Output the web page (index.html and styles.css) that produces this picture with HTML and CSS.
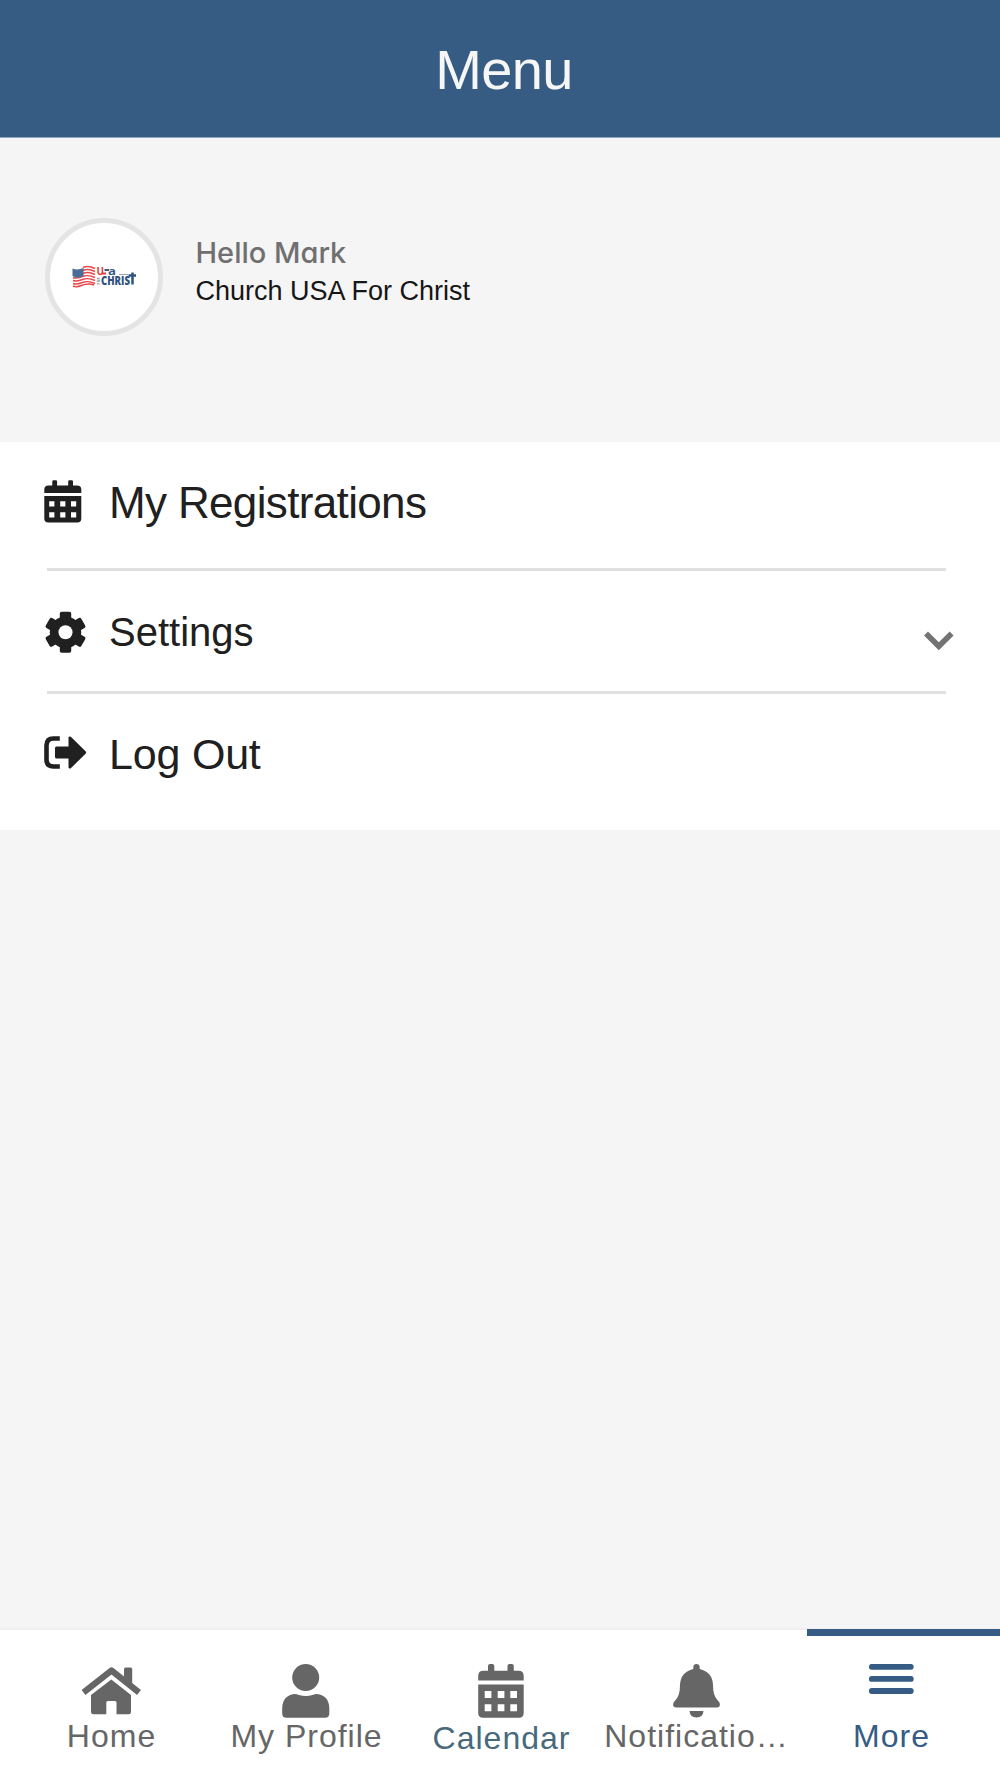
FILE: index.html
```html
<!DOCTYPE html>
<html lang="en">
<head>
<meta charset="utf-8">
<title>Menu</title>
<link rel="stylesheet" href="styles.css">
</head>
<body>
<div class="app">
  <header class="header"><h1>Menu</h1></header>

  <section class="profile">
    <div class="avatar">
      <svg width="64" height="26" viewBox="0 0 64 26">
        <path d="M1 5C7 9 11 0 23 4V21C12 17 8 27 1 22Z" fill="#fff"/>
        <g fill="none" stroke="#e8474a" stroke-width="1.5">
          <path d="M11 3.5C15 1.5 18 2 23 4.5"/>
          <path d="M11 6.5C15 4.5 18 5 23 7.5"/>
          <path d="M11 9.5C15 7.5 18 8 23 10.5"/>
          <path d="M1 13.5C8 16.5 11 8 23 13.5"/>
          <path d="M1 16.5C8 19.5 11 11 23 16.5"/>
          <path d="M1 19.5C8 22.5 11 14 23 19.5"/>
          <path d="M1 22C8 25.5 11 17 22 21"/>
        </g>
        <path d="M.5 4.5C5 6.5 8 5 11.500 4V12C8 14 5 14.500 .5 12Z" fill="#4a6c97"/>
        <text class="logo-usa" x="24.5" y="11" textLength="7.5" lengthAdjust="spacingAndGlyphs" fill="#e33b40">U</text>
        <path d="M30 9.500H34" stroke="#e33b40" stroke-width="2"/>
        <path d="M32.500 6H37" stroke="#365c85" stroke-width="2"/>
        <text class="logo-usa" x="36" y="11" textLength="8" lengthAdjust="spacingAndGlyphs" fill="#365c85">a</text>
        <text class="logo-for" transform="translate(27.5 20.5) rotate(-90)" textLength="7">FOR</text>
        <text class="logo-christ" x="29" y="20.5" textLength="29" lengthAdjust="spacingAndGlyphs">CHRIS</text>
        <path d="M60.500 8.500V20.500M56.500 11.500H64" stroke="#2f5380" stroke-width="2.500"/>
        <path d="M47 10.500H56" stroke="#9aa4ac" stroke-width="1"/>
      </svg>
    </div>
    <div class="who">
      <p class="hello">Hello Mark</p>
      <p class="org">Church USA For Christ</p>
    </div>
  </section>

  <main class="menu">
    <a class="row registrations">
      <svg class="row-icon" viewBox="0 0 64 50">
        <path fill-rule="evenodd" d="M8.300 4.500q0-1.300 1.300-1.300h2.200q1.300 0 1.300 1.300V8.500H24.200V4.500q0-1.300 1.300-1.300h2.200q1.300 0 1.300 1.300V8.500H33q4.300 0 4.300 4V16H.300V12.500q0-4 4.300-4H8.300ZM.300 19H37.300V41.500q0 4-4 4H4.300q-4 0-4-4ZM5.200 24.300v5.200h5.200v-5.200ZM16.200 24.300v5.200h5.200v-5.200ZM27 24.300v5.200h5.200v-5.200ZM5.200 35.300v5.200h5.200v-5.200ZM16.200 35.300v5.200h5.200v-5.200ZM27 35.300v5.200h5.200v-5.200Z"/>
      </svg>
      <span>My Registrations</span>
    </a>
    <hr>
    <a class="row settings">
      <svg class="row-icon" viewBox="0 0 64 50">
        <g transform="translate(21.5 26.3)">
          <circle r="15.7"/>
          <rect x="-5.7" y="-20.5" width="11.4" height="41" rx="1.8"/>
          <rect x="-5.7" y="-20.5" width="11.4" height="41" rx="1.8" transform="rotate(60)"/>
          <rect x="-5.7" y="-20.5" width="11.4" height="41" rx="1.8" transform="rotate(120)"/>
          <circle r="7" fill="#fff"/>
        </g>
      </svg>
      <span>Settings</span>
      <svg class="chevron" width="30" height="20" viewBox="0 0 30 20"><path d="M2 2.500 14.800 15.300 27.600 2.500" fill="none" stroke="#737373" stroke-width="5.6"/></svg>
    </a>
    <hr>
    <a class="row logout">
      <svg class="row-icon" viewBox="0 0 64 50">
        <path d="M15.800 10.500H9.500Q2.500 10.500 2.500 17.500V31.500Q2.500 38.500 9.500 38.500H15.800" fill="none" stroke="#202020" stroke-width="4.6"/>
        <path d="M12.500 18.500H24.500V9.500Q25 7.800 26.800 8.800L41.800 23.500Q42.500 24.500 41.800 25.500L26.800 40.200Q25 41.200 24.500 39.500V30.500H12.500Q11 30.500 11 29V20Q11 18.500 12.500 18.500Z"/>
      </svg>
      <span>Log Out</span>
    </a>
  </main>

  <nav class="tabs">
    <a class="tab">
      <svg viewBox="0 0 64 54">
        <path d="M4.500 28.500 32.500 6.500 60 28.500" fill="none" stroke="#666" stroke-width="6.2" stroke-linejoin="round"/>
        <path d="M45 5.200Q45 3.500 46.700 3.500H51.500Q53.200 3.500 53.200 5.200V23L45 16.500Z"/>
        <path d="M12 31 32.300 15.500 52 31V48Q52 50.300 49.700 50.300H37.500V38.500Q37.500 37 36 37H28.800Q27.300 37 27.300 38.500V50.300H14.500Q12 50.300 12 48Z"/>
      </svg>
      <span>Home</span>
    </a>
    <a class="tab">
      <svg viewBox="0 0 64 54">
        <circle cx="31.7" cy="13.5" r="13.5"/>
        <path d="M20.500 30Q23 30 25 31Q31.700 33.200 38.500 31Q40.500 30 43 30Q55 31.500 55.300 44V49.500Q55.300 53.700 51 53.700H12.500Q8.200 53.700 8.200 49.500V44Q8.500 31.500 20.500 30Z"/>
      </svg>
      <span>My Profile</span>
    </a>
    <a class="tab calendar">
      <svg viewBox="0 0 64 54">
        <path fill-rule="evenodd" d="M19 2Q19 0 21 0H23.300Q25.300 0 25.300 2V6.800H38.500V2Q38.500 0 40.500 0H42.800Q44.800 0 44.800 2V6.800H49.500Q54.700 6.800 54.700 12V16.500H9.200V12Q9.200 6.800 14.400 6.800H19ZM9.200 20.500H54.700V49Q54.700 53.700 50 53.700H14Q9.200 53.700 9.200 49ZM15.700 27v7h6.700V27ZM28.700 27v7h6.700V27ZM41.300 27v7h6.700V27ZM15.700 40.300v7h6.700v-7ZM28.700 40.300v7h6.700v-7ZM41.300 40.300v7h6.700v-7Z"/>
      </svg>
      <span>Calendar</span>
    </a>
    <a class="tab">
      <svg viewBox="0 0 64 54">
        <path d="M29.300 5V3Q29.500 0 32.500 0T35.700 3V5Q48.500 8 49 21Q49 31 53 35.500L55.500 38.500Q57 43.500 52.500 43.500H12.500Q8 43.500 9.500 38.500L12 35.500Q16 31 16 21Q16.500 8 29.300 5ZM25.500 47H39.500Q39 53.500 32.500 53.500T25.500 47Z"/>
      </svg>
      <span>Notificatio…</span>
    </a>
    <a class="tab active">
      <svg viewBox="0 0 64 54">
        <path d="M12.800 2.800H51.800M12.800 14.900H51.800M12.800 27H51.800" fill="none" stroke="#365c85" stroke-width="5.8" stroke-linecap="round"/>
      </svg>
      <span>More</span>
    </a>
  </nav>
</div>
</body>
</html>
```
FILE: styles.css
```css
* { box-sizing: border-box; }

body, h1, p { margin: 0; }

body {
  background: #f5f5f5;
  color: #202020;
  font-family: "Liberation Sans", Arial, sans-serif;
}

.app {
  display: flex;
  flex-direction: column;
  height: 1778px;
}

.header {
  height: 138px;
  padding: 1px 0 0 8px;
  background: #365c83;
  border-bottom: 1px solid #8fa5ba;
  text-align: center;
}

.header h1 {
  color: #f6f6f6;
  font-size: 56px;
  font-weight: 400;
  letter-spacing: -0.7px;
  line-height: 137px;
}

.profile {
  display: flex;
  height: 304px;
  padding: 79.5px 0 0 44.5px;
}

.avatar {
  display: flex;
  align-items: center;
  justify-content: center;
  width: 118px;
  height: 118px;
  border: 5px solid #e4e4e4;
  border-radius: 50%;
  background: #fff;
}

.logo-usa { font: bold 11px "Open Sans", sans-serif; }
.logo-for { font: bold 3px "Open Sans", sans-serif; fill: #777; }
.logo-christ { font: 800 12px "Open Sans", sans-serif; fill: #2f5380; }

.who { padding: 16.5px 0 0 33px; }

.hello {
  color: #707070;
  font: 500 29px/38px Inter, sans-serif;
  font-feature-settings: "cv11";
}

.org {
  margin-top: 2px;
  color: #161616;
  font-size: 27px;
  line-height: 34px;
}

.menu {
  height: 388px;
  background: #fff;
}

.row {
  display: flex;
  align-items: flex-start;
  padding: 35px 46px 0 44px;
  fill: #202020;
  line-height: 50px;
}

.row span { padding: 1px 0 0 1px; }

.row-icon {
  width: 64px;
  height: 50px;
}

.registrations { height: 126px; font-size: 44px; letter-spacing: -0.65px; }
.settings { height: 120px; font-size: 40px; }
.logout { height: 136px; padding-top: 34px; font-size: 43px; letter-spacing: -0.2px; }
.logout span { padding-top: 0.5px; }
.chevron { margin: 25px 0 0 auto; }

hr {
  height: 3px;
  margin: 0 54px 0 47px;
  border: 0;
  background: #e0e0e0;
}

.tabs {
  display: grid;
  grid-template-columns: repeat(5, 195px);
  height: 150px;
  margin-top: auto;
  padding-left: 13.5px;
  border-top: 2px solid #f0f0f0;
  background: #fff;
}

.tab {
  display: flex;
  position: relative;
  flex-direction: column;
  align-items: center;
  padding-top: 34px;
  color: #666;
  fill: #666;
  font-size: 32px;
  letter-spacing: 1px;
  line-height: 36px;
  white-space: nowrap;
}

.tab svg {
  width: 64px;
  height: 54px;
}

.tab span { padding-left: 1px; }
.calendar { color: #48697b; }
.calendar span { padding-top: 2px; }
.active { color: #365c85; }

/* indicator bar above the current tab */
.active::before {
  position: absolute;
  top: -1px;
  right: -11.5px;
  width: 193px;
  height: 7px;
  background: #365c85;
  content: "";
}
```
